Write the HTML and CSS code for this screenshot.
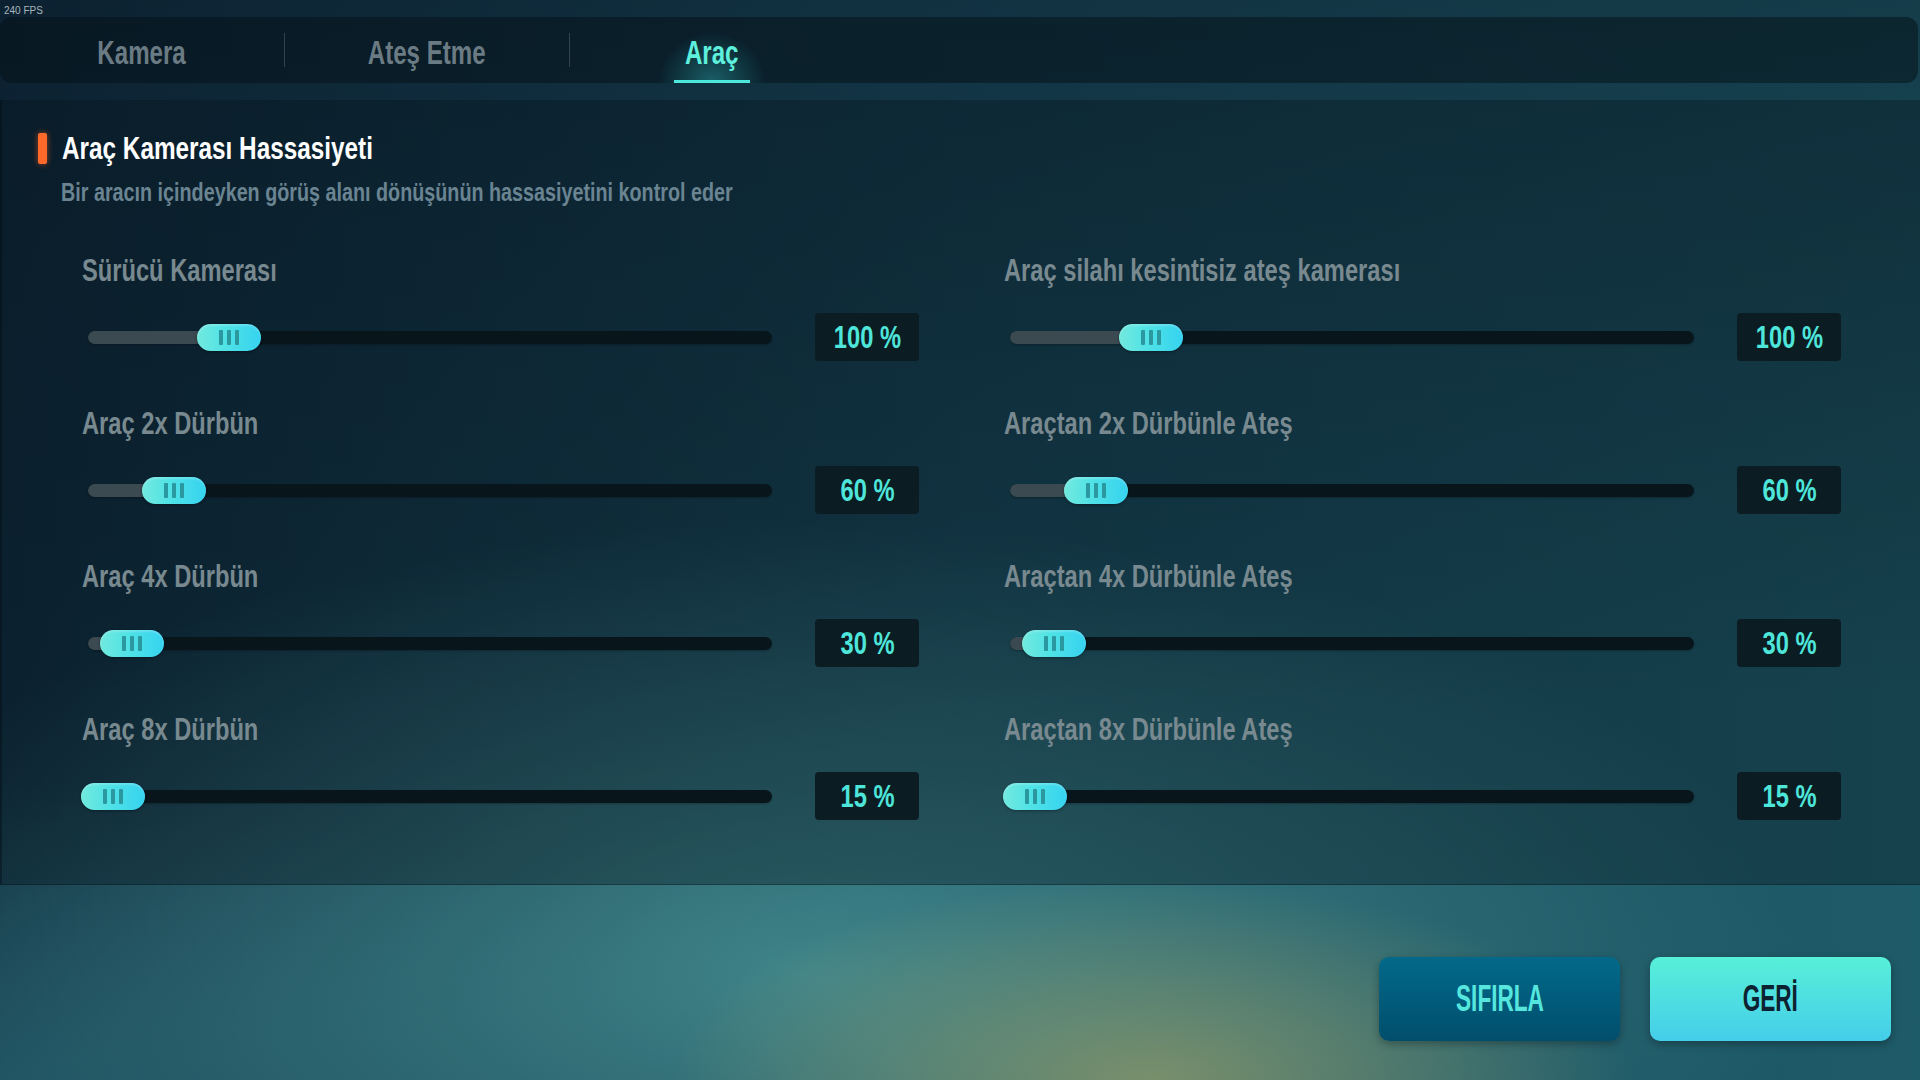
FILE: index.html
```html
<!DOCTYPE html>
<html lang="tr">
<head>
<meta charset="utf-8">
<title>Araç Ayarları</title>
<link rel="stylesheet" href="styles.css">
</head>
<body>
<div class="fps">240 FPS</div>
<nav class="tabs">
  <div class="tab"><span class="tab-text">Kamera</span></div>
  <div class="sep"></div>
  <div class="tab"><span class="tab-text">Ateş Etme</span></div>
  <div class="sep"></div>
  <div class="tab active"><span class="tab-text">Araç</span></div>
</nav>
<main class="panel">
  <div class="heading">
    <span class="marker"></span>
    <h1 class="title"><span class="title-text">Araç Kamerası Hassasiyeti</span></h1>
  </div>
  <p class="desc"><span class="desc-text">Bir aracın içindeyken görüş alanı dönüşünün hassasiyetini kontrol eder</span></p>
  <div class="grid">
    <div class="setting">
      <div class="label"><span class="label-text">Sürücü Kamerası</span></div>
      <div class="control">
        <div class="track"><div class="fill" style="width:141px"></div><div class="thumb" style="left:109px"><i></i><i></i><i></i></div></div>
        <div class="value"><span class="value-text">100 %</span></div>
      </div>
    </div>
    <div class="setting">
      <div class="label"><span class="label-text">Araç silahı kesintisiz ateş kamerası</span></div>
      <div class="control">
        <div class="track"><div class="fill" style="width:141px"></div><div class="thumb" style="left:109px"><i></i><i></i><i></i></div></div>
        <div class="value"><span class="value-text">100 %</span></div>
      </div>
    </div>
    <div class="setting">
      <div class="label"><span class="label-text">Araç 2x Dürbün</span></div>
      <div class="control">
        <div class="track"><div class="fill" style="width:86px"></div><div class="thumb" style="left:54px"><i></i><i></i><i></i></div></div>
        <div class="value"><span class="value-text">60 %</span></div>
      </div>
    </div>
    <div class="setting">
      <div class="label"><span class="label-text">Araçtan 2x Dürbünle Ateş</span></div>
      <div class="control">
        <div class="track"><div class="fill" style="width:86px"></div><div class="thumb" style="left:54px"><i></i><i></i><i></i></div></div>
        <div class="value"><span class="value-text">60 %</span></div>
      </div>
    </div>
    <div class="setting">
      <div class="label"><span class="label-text">Araç 4x Dürbün</span></div>
      <div class="control">
        <div class="track"><div class="fill" style="width:44px"></div><div class="thumb" style="left:12px"><i></i><i></i><i></i></div></div>
        <div class="value"><span class="value-text">30 %</span></div>
      </div>
    </div>
    <div class="setting">
      <div class="label"><span class="label-text">Araçtan 4x Dürbünle Ateş</span></div>
      <div class="control">
        <div class="track"><div class="fill" style="width:44px"></div><div class="thumb" style="left:12px"><i></i><i></i><i></i></div></div>
        <div class="value"><span class="value-text">30 %</span></div>
      </div>
    </div>
    <div class="setting">
      <div class="label"><span class="label-text">Araç 8x Dürbün</span></div>
      <div class="control">
        <div class="track"><div class="fill" style="width:25px"></div><div class="thumb" style="left:-7px"><i></i><i></i><i></i></div></div>
        <div class="value"><span class="value-text">15 %</span></div>
      </div>
    </div>
    <div class="setting">
      <div class="label"><span class="label-text">Araçtan 8x Dürbünle Ateş</span></div>
      <div class="control">
        <div class="track"><div class="fill" style="width:25px"></div><div class="thumb" style="left:-7px"><i></i><i></i><i></i></div></div>
        <div class="value"><span class="value-text">15 %</span></div>
      </div>
    </div>
  </div>
</main>
<footer class="actions">
  <button class="btn btn-reset"><span class="btn-text">SIFIRLA</span></button>
  <button class="btn btn-back"><span class="btn-text">GERİ</span></button>
</footer>
</body>
</html>
```

FILE: styles.css
```css
* { box-sizing: border-box; }

html, body { margin: 0; padding: 0; }

body {
  width: 1920px;
  height: 1080px;
  overflow: hidden;
  font-family: "Liberation Sans", Arial, sans-serif;
  font-weight: 700;
  display: flex;
  flex-direction: column;
  background:
    radial-gradient(ellipse 480px 200px at 60% 100%, rgba(160, 160, 100, 0.65), rgba(160, 160, 100, 0) 100%),
    radial-gradient(ellipse 1000px 450px at 42% 90%, rgba(78, 158, 158, 0.72), rgba(78, 158, 158, 0) 100%),
    radial-gradient(ellipse 700px 300px at 0% 100%, rgba(40, 110, 125, 0.5), rgba(40, 110, 125, 0) 100%),
    linear-gradient(180deg, rgba(8, 22, 36, 0.45) 0%, rgba(8, 22, 36, 0) 65%),
    linear-gradient(90deg, #0f2a3b 0%, #19495a 50%, #1e5b68 100%);
}

/* top counter */
.fps {
  height: 17px;
  padding: 5px 0 0 4px;
  font-family: "Liberation Sans", Arial, sans-serif;
  font-weight: 400;
  font-size: 10px;
  line-height: 11px;
  color: #a7b6bd;
}

/* tab bar */
.tabs {
  height: 66px;
  margin-right: 2px;
  display: flex;
  align-items: stretch;
  background: rgba(4, 16, 22, 0.5);
  border-radius: 12px;
}

.tab {
  position: relative;
  width: 284px;
  display: flex;
  align-items: center;
  justify-content: center;
  padding-top: 5px;
}

.tab-text {
  display: inline-block;
  font-size: 33px;
  line-height: 38px;
  color: #6b7b84;
  transform: scaleX(0.73);
}

.tab.active .tab-text { color: #5ef0dc; }

.tab.active::before {
  content: "";
  position: absolute;
  left: 50%;
  bottom: 0;
  width: 120px;
  height: 56px;
  margin-left: -60px;
  background: radial-gradient(ellipse 45% 90% at 50% 100%, rgba(50, 190, 195, 0.4), rgba(50, 190, 195, 0) 100%);
}

.tab.active::after {
  content: "";
  position: absolute;
  left: 50%;
  bottom: 0;
  width: 76px;
  height: 3px;
  margin-left: -38px;
  background: #4de8dc;
}

.sep {
  width: 1px;
  height: 34px;
  align-self: center;
  background: rgba(150, 170, 180, 0.28);
}

/* main panel */
.panel {
  margin-top: 17px;
  height: 785px;
  padding: 28px 0 0 38px;
  background: rgba(5, 18, 27, 0.34);
  border-left: 2px solid rgba(3, 14, 22, 0.45);
  border-bottom: 1px solid rgba(3, 14, 22, 0.35);
}

.heading {
  display: flex;
  align-items: center;
  height: 40px;
  margin-left: -2px;
}

.marker {
  width: 9px;
  height: 31px;
  border-radius: 2px;
  background: #ff6a2a;
  box-shadow: 0 0 6px rgba(255, 100, 40, 0.55);
}

.title {
  margin: 0 0 0 15px;
  font-size: 32px;
  line-height: 40px;
  font-weight: 700;
  color: #ffffff;
}

.title-text,
.desc-text,
.label-text {
  display: inline-block;
  transform-origin: 0 50%;
  white-space: nowrap;
}

.title-text { transform: scaleX(0.76); }

.desc {
  margin: 9px 0 0 21px;
  font-size: 25px;
  line-height: 30px;
  color: #6a8492;
}

.desc-text { transform: scaleX(0.79); }

.grid {
  margin: 43px 0 0 42px;
  display: grid;
  grid-template-columns: 837px 837px;
  column-gap: 85px;
  row-gap: 42px;
}

.label {
  height: 40px;
  font-size: 32px;
  line-height: 40px;
  color: #78898f;
}

.label-text { transform: scaleX(0.74); }

.control {
  margin-top: 23px;
  height: 48px;
  display: flex;
  align-items: center;
}

.track {
  position: relative;
  width: 686px;
  height: 13px;
  margin-left: 6px;
  border-radius: 7px;
  background: #08161b;
  box-shadow: 0 1px 2px rgba(0, 0, 0, 0.25);
}

.fill {
  height: 100%;
  border-radius: 7px 0 0 7px;
  background: #3a4a50;
}

.thumb {
  position: absolute;
  top: -7px;
  width: 64px;
  height: 27px;
  border-radius: 14px;
  display: flex;
  align-items: center;
  justify-content: center;
  gap: 4px;
  background: linear-gradient(90deg, #72e9de 0%, #4fe2e6 45%, #36d3f0 100%);
  box-shadow: inset 0 2px 2px rgba(255, 255, 255, 0.2), 0 1px 3px rgba(0, 0, 0, 0.35);
}

.thumb i {
  display: block;
  width: 4px;
  height: 15px;
  border-radius: 1px;
  background: #2b979e;
}

.value {
  margin-left: 43px;
  width: 104px;
  height: 48px;
  border-radius: 4px;
  background: #0b1c23;
  display: flex;
  align-items: center;
  justify-content: center;
  font-size: 32px;
  line-height: 48px;
  color: #4ee6da;
}

.value-text {
  display: inline-block;
  white-space: nowrap;
  transform: scaleX(0.74);
}

/* footer buttons */
.actions {
  flex: 1;
  display: flex;
  justify-content: flex-end;
  align-items: flex-start;
  gap: 30px;
  padding: 72px 29px 0 0;
}

.btn {
  width: 241px;
  height: 84px;
  border: 0;
  border-radius: 10px;
  padding: 0;
  display: flex;
  align-items: center;
  justify-content: center;
  font-family: "Liberation Sans", Arial, sans-serif;
  font-weight: 700;
  font-size: 37px;
  line-height: 40px;
  box-shadow: 0 3px 8px rgba(0, 0, 0, 0.3);
}

.btn-text {
  display: inline-block;
  white-space: nowrap;
  transform: scaleX(0.61);
}

.btn-reset {
  background: linear-gradient(180deg, #02698a 0%, #014e6c 100%);
  color: #55e7de;
}

.btn-back {
  background: linear-gradient(180deg, #57f0d8 0%, #45cdea 100%);
  color: #0d2230;
}
```
